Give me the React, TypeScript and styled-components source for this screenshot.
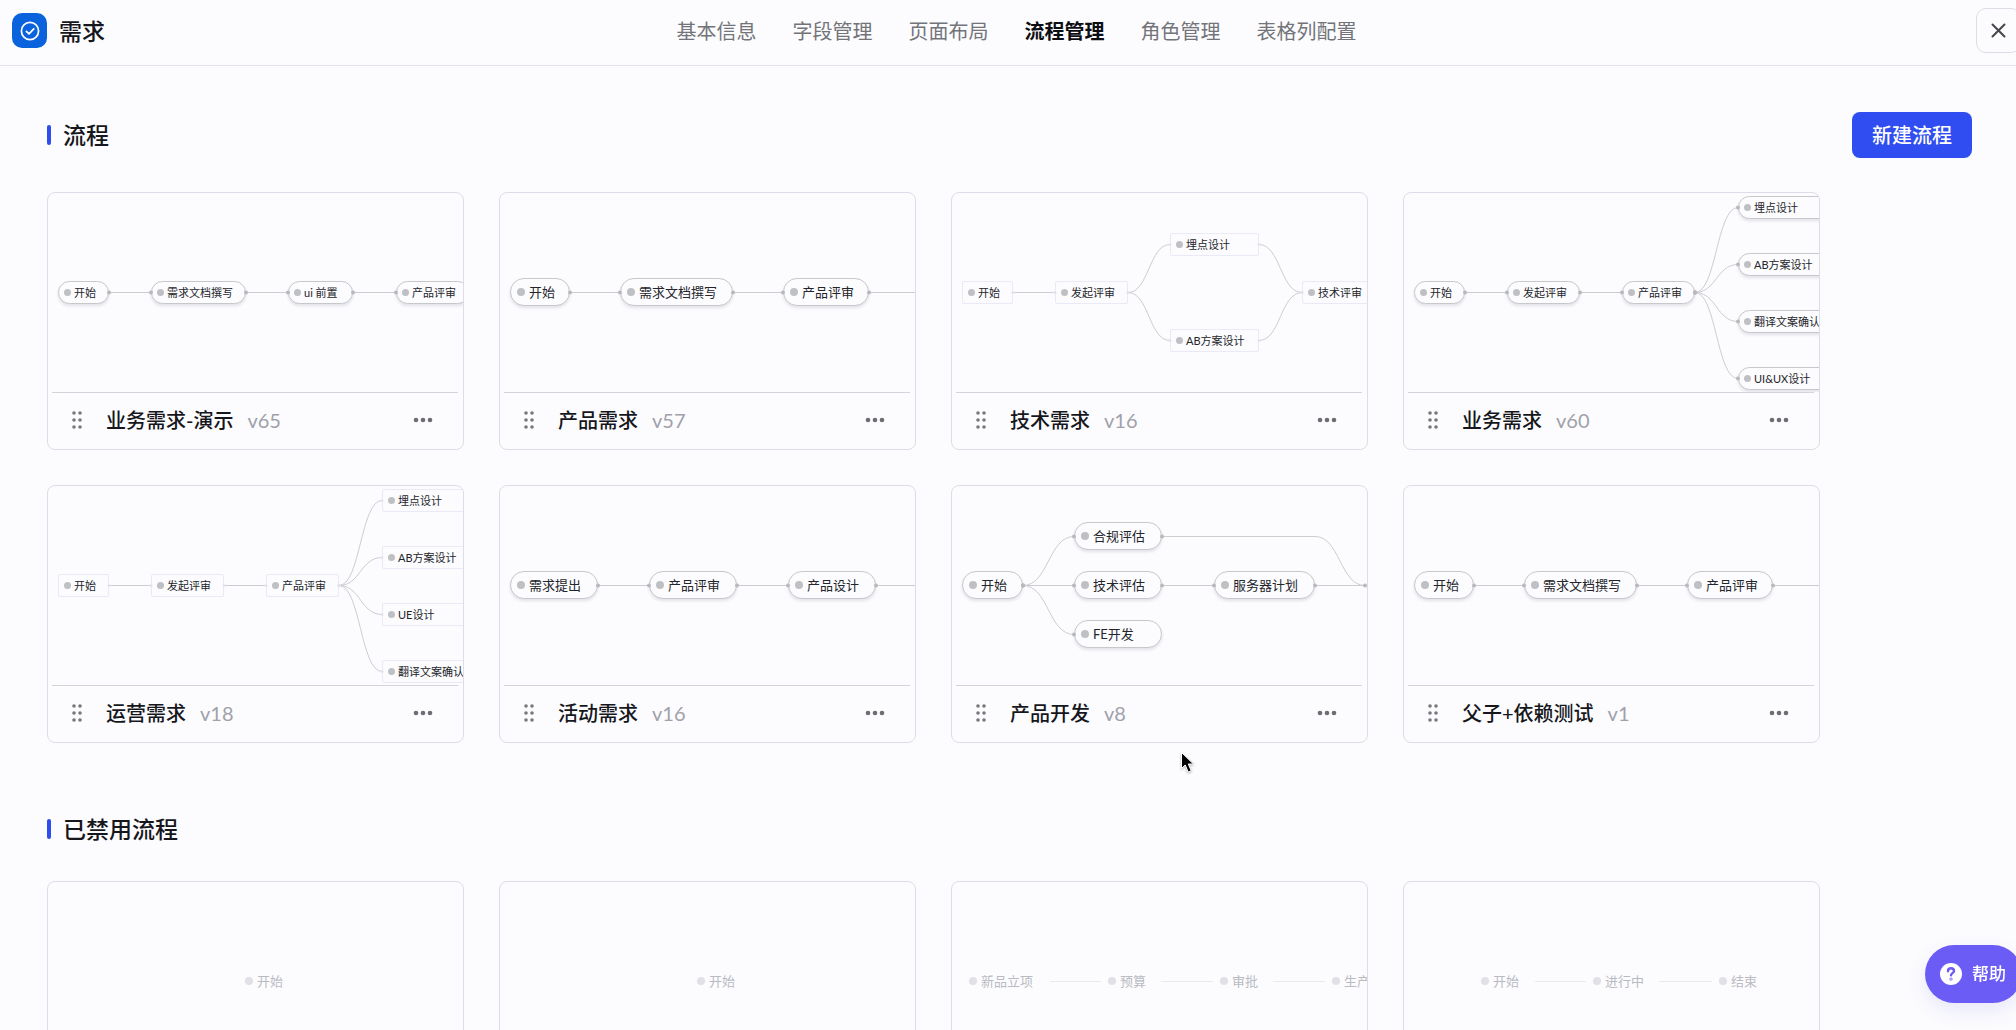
import React from "react";
import styled, { createGlobalStyle, css } from "styled-components";

const GlobalStyle = createGlobalStyle`
  *, *::before, *::after { box-sizing: border-box; }
  body {
    margin: 0;
    background: #fcfcfe;
    color: #16171c;
    font-family: Lato, "Noto Sans CJK SC", sans-serif;
    font-size: 20px;
    line-height: 28px;
  }
  button { font: inherit; color: inherit; padding: 0; border: 0; background: none; cursor: pointer; }
  h1, h2, h3, ul { margin: 0; padding: 0; font-size: inherit; font-weight: inherit; list-style: none; }
`;

const Page = styled.div`
  display: flex;
  flex-direction: column;
  height: 100vh;
  overflow: hidden;
`;

/* ---------- header ---------- */

const Header = styled.header`
  display: grid;
  grid-template-columns: 1fr auto 1fr;
  align-items: center;
  flex: none;
  height: 66px;
  margin-right: -5px;
  padding: 0 0 4px 12px;
  border-bottom: 1px solid #e1e4ea;
`;

const Brand = styled.div`
  display: flex;
  align-items: center;
  gap: 12px;
`;

const BrandIcon = styled.span`
  display: grid;
  place-items: center;
  width: 35px;
  height: 35px;
  border-radius: 10px;
  background: #0a63dc;
`;

const BrandTitle = styled.h1`
  font-size: 23px;
  font-weight: 500;
`;

const Tabs = styled.nav`
  display: flex;
  gap: 36px;
`;

const Tab = styled.a<{ $active?: boolean }>`
  color: ${(p) => (p.$active ? "#0d0e12" : "#73747a")};
  font-weight: ${(p) => (p.$active ? 700 : 400)};
  text-decoration: none;
`;

const CloseButton = styled.button`
  display: grid;
  place-items: center;
  justify-self: end;
  width: 45px;
  height: 45px;
  border: 1px solid #dcdde6;
  border-radius: 10px;
`;

/* ---------- sections ---------- */

const Main = styled.main`
  flex: 1;
  min-height: 0;
  padding: 46px 44px 46px 47px;
  overflow-y: auto;
  scrollbar-width: none;
`;

const Section = styled.section`
  margin-bottom: 63px;
`;

const SectionHead = styled.div<{ $gap: number }>`
  display: flex;
  align-items: center;
  justify-content: space-between;
  min-height: 46px;
  margin-bottom: ${(p) => p.$gap}px;
`;

const SectionTitle = styled.h2`
  display: flex;
  align-items: center;
  gap: 12px;
  font-size: 23px;
  font-weight: 500;

  &::before {
    content: "";
    width: 4px;
    height: 20px;
    border-radius: 2px;
    background: #2f4cec;
  }
`;

const PrimaryButton = styled.button`
  height: 46px;
  padding: 0 20px;
  border-radius: 8px;
  background: #2f4df0;
  color: #fff;
  font-weight: 500;
`;

const CardGrid = styled.ul`
  display: grid;
  grid-template-columns: repeat(auto-fill, 417px);
  gap: 35px;
`;

const Card = styled.li`
  border: 1px solid #dcdde8;
  border-radius: 8px;
  overflow: hidden;
`;

const CardFooter = styled.div`
  display: flex;
  align-items: center;
  height: 57px;
  margin: 0 5px 0 4px;
  padding: 0 21px 2px 16px;
  border-top: 1px solid #d3d5dc;
`;

const DragHandle = styled.button`
  display: grid;
  place-items: center;
  width: 18px;
  height: 28px;
  margin-right: 20px;
  cursor: grab;
`;

const CardTitle = styled.h3`
  font-weight: 500;
`;

const Version = styled.span`
  flex: 1;
  margin-left: 14px;
  color: #a0a1aa;
`;

const MoreButton = styled.button`
  display: grid;
  place-items: center;
  width: 28px;
  height: 28px;
`;

/* ---------- flow preview canvas ---------- */

type Shape = "pill" | "box" | "ghost";
type Size = "sm" | "lg";

const Canvas = styled.div`
  position: relative;
  height: 199px;
  overflow: hidden;
`;

const Edges = styled.svg`
  position: absolute;
  inset: 0;
  width: 100%;
  height: 100%;
`;

const shapes = {
  pill: css`
    border: 1px solid #c6c8cc;
    border-radius: 14px;
    box-shadow: 0 2px 3px rgba(40, 40, 80, 0.12);
    color: #24252b;
  `,
  box: css`
    border: 1px solid #e9e9f7;
    border-radius: 2px;
    color: #24252b;
  `,
  ghost: css`
    border: 1px solid transparent;
    color: #b9bac2;
  `,
};

const NodeBox = styled.div<{ $shape: Shape; $size: Size }>`
  position: absolute;
  display: flex;
  align-items: center;
  gap: ${(p) => (p.$size === "sm" ? 3 : 4)}px;
  height: ${(p) => (p.$size === "sm" ? 23 : 28)}px;
  margin-top: ${(p) => (p.$size === "sm" ? -11 : -14)}px;
  padding-left: ${(p) => (p.$size === "sm" ? 5 : 6)}px;
  background: #fcfcfe;
  font-size: ${(p) => (p.$size === "sm" ? 11 : 13)}px;
  line-height: 20px;
  white-space: nowrap;
  ${(p) => shapes[p.$shape]}

  &::before {
    content: "";
    flex: none;
    width: ${(p) => (p.$size === "sm" ? 7 : 8)}px;
    height: ${(p) => (p.$size === "sm" ? 7 : 8)}px;
    border-radius: 50%;
    background: ${(p) => (p.$shape === "ghost" ? "#e0e0e6" : "#bfc0c4")};
  }
`;

type FlowNode = { label: string; x: number; w: number; y?: number };
type Flow = {
  name?: string;
  version?: string;
  shape: Shape;
  size: Size;
  nodes: FlowNode[];
  /* index pairs into nodes */
  links: [number, number][];
  /* extra paths for links that leave the visible canvas */
  tails?: string[];
  /* ports of nodes that sit on the canvas edge */
  tailPorts?: [number, number][];
};

const MID = 99;

const chain = (count: number): [number, number][] =>
  Array.from({ length: count - 1 }, (_, i) => [i, i + 1]);

const LONG_CHAIN: FlowNode[] = [
  { label: "开始", x: 10, w: 60 },
  { label: "需求文档撰写", x: 120, w: 113 },
  { label: "产品评审", x: 283, w: 86 },
];

const fanOut = (labels: string[]): FlowNode[] => [
  { label: "开始", x: 10, w: 51 },
  { label: "发起评审", x: 103, w: 73 },
  { label: "产品评审", x: 218, w: 73 },
  ...labels.map((label, i) => ({ label, x: 334, w: 101, y: [14, 71, 128, 185][i] })),
];

const FAN_LINKS: [number, number][] = [[0, 1], [1, 2], [2, 3], [2, 4], [2, 5], [2, 6]];

const activeFlows: Flow[] = [
  {
    name: "业务需求-演示", version: "v65", shape: "pill", size: "sm",
    nodes: [
      { label: "开始", x: 10, w: 51 },
      { label: "需求文档撰写", x: 103, w: 95 },
      { label: "ui 前置", x: 240, w: 65 },
      { label: "产品评审", x: 348, w: 73 },
    ],
    links: chain(4),
  },
  {
    name: "产品需求", version: "v57", shape: "pill", size: "lg",
    nodes: LONG_CHAIN, links: chain(3), tails: ["M369 99H416"],
  },
  {
    name: "技术需求", version: "v16", shape: "box", size: "sm",
    nodes: [
      { label: "开始", x: 10, w: 51 },
      { label: "发起评审", x: 103, w: 73 },
      { label: "埋点设计", x: 218, w: 89, y: 51 },
      { label: "AB方案设计", x: 218, w: 89, y: 147 },
      { label: "技术评审", x: 350, w: 73 },
    ],
    links: [[0, 1], [1, 2], [1, 3], [2, 4], [3, 4]],
  },
  {
    name: "业务需求", version: "v60", shape: "pill", size: "sm",
    nodes: fanOut(["埋点设计", "AB方案设计", "翻译文案确认", "UI&UX设计"]),
    links: FAN_LINKS,
  },
  {
    name: "运营需求", version: "v18", shape: "box", size: "sm",
    nodes: fanOut(["埋点设计", "AB方案设计", "UE设计", "翻译文案确认"]),
    links: FAN_LINKS,
  },
  {
    name: "活动需求", version: "v16", shape: "pill", size: "lg",
    nodes: [
      { label: "需求提出", x: 10, w: 88 },
      { label: "产品评审", x: 149, w: 88 },
      { label: "产品设计", x: 288, w: 88 },
    ],
    links: chain(3), tails: ["M376 99H416"],
  },
  {
    name: "产品开发", version: "v8", shape: "pill", size: "lg",
    nodes: [
      { label: "开始", x: 10, w: 61 },
      { label: "合规评估", x: 122, w: 88, y: 50 },
      { label: "技术评估", x: 122, w: 88 },
      { label: "FE开发", x: 122, w: 88, y: 148 },
      { label: "服务器计划", x: 262, w: 101 },
    ],
    links: [[0, 1], [0, 2], [0, 3], [2, 4]],
    tails: ["M210 50H363C388 50 388 99 413 99", "M363 99H413"],
    tailPorts: [[210, 50], [363, 99], [413, 99]],
  },
  {
    name: "父子+依赖测试", version: "v1", shape: "pill", size: "lg",
    nodes: LONG_CHAIN, links: chain(3), tails: ["M369 99H416"],
  },
];

const disabledFlows: Flow[] = [
  { shape: "ghost", size: "lg", nodes: [{ label: "开始", x: 190, w: 60 }], links: [] },
  { shape: "ghost", size: "lg", nodes: [{ label: "开始", x: 190, w: 60 }], links: [] },
  {
    shape: "ghost", size: "lg",
    nodes: [
      { label: "新品立项", x: 10, w: 88 },
      { label: "预算", x: 149, w: 60 },
      { label: "审批", x: 261, w: 60 },
      { label: "生产", x: 373, w: 60 },
    ],
    links: chain(4),
  },
  {
    shape: "ghost", size: "lg",
    nodes: [
      { label: "开始", x: 70, w: 61 },
      { label: "进行中", x: 182, w: 73 },
      { label: "结束", x: 308, w: 60 },
    ],
    links: chain(3),
  },
];

function linkPath(a: FlowNode, b: FlowNode) {
  const x1 = a.x + a.w;
  const y1 = a.y ?? MID;
  const y2 = b.y ?? MID;
  const mid = (x1 + b.x) / 2;
  return y1 === y2 ? `M${x1} ${y1}H${b.x}` : `M${x1} ${y1}C${mid} ${y1} ${mid} ${y2} ${b.x} ${y2}`;
}

function Preview({ flow }: { flow: Flow }) {
  const stroke = flow.shape === "ghost" ? "#e9e9f0" : "#cccdd3";
  const ports: [number, number][] = flow.links.flatMap(([a, b]): [number, number][] => {
    const from = flow.nodes[a];
    const to = flow.nodes[b];
    return [[from.x + from.w, from.y ?? MID], [to.x, to.y ?? MID]];
  });
  if (flow.tails && !flow.tailPorts) {
    const last = flow.nodes[flow.nodes.length - 1];
    ports.push([last.x + last.w, MID]);
  }
  ports.push(...(flow.tailPorts ?? []));

  return (
    <Canvas>
      <Edges aria-hidden="true">
        <g fill="none" stroke={stroke} transform="translate(0 0.5)">
          {flow.links.map(([a, b]) => (
            <path key={`${a}-${b}`} d={linkPath(flow.nodes[a], flow.nodes[b])} />
          ))}
          {flow.tails?.map((d) => <path key={d} d={d} />)}
        </g>
      </Edges>
      {flow.nodes.map((n) => (
        <NodeBox
          key={n.label}
          $shape={flow.shape}
          $size={flow.size}
          style={{ left: n.x, top: n.y ?? MID, width: n.w }}
        >
          {n.label}
        </NodeBox>
      ))}
      {flow.shape !== "ghost" && (
        <Edges aria-hidden="true">
          {ports.map(([x, y], i) => (
            <circle
              key={i}
              cx={x}
              cy={y + 0.5}
              r={flow.shape === "pill" ? 2 : 1.5}
              fill={flow.shape === "pill" ? "#b7b9bd" : "#e3e3ee"}
            />
          ))}
        </Edges>
      )}
    </Canvas>
  );
}

function FlowCard({ flow }: { flow: Flow }) {
  return (
    <Card>
      <Preview flow={flow} />
      {flow.name && (
        <CardFooter>
          <DragHandle aria-label="拖动排序">
            <svg width="10" height="18" viewBox="0 0 10 18" fill="#77787d">
              {[2, 9, 16].map((y) => (
                <React.Fragment key={y}>
                  <circle cx="2" cy={y} r="1.8" />
                  <circle cx="8" cy={y} r="1.8" />
                </React.Fragment>
              ))}
            </svg>
          </DragHandle>
          <CardTitle>{flow.name}</CardTitle>
          <Version>{flow.version}</Version>
          <MoreButton aria-label="更多">
            <svg width="20" height="6" viewBox="0 0 20 6" fill="#6d6e73">
              <circle cx="3" cy="3" r="2.3" />
              <circle cx="10" cy="3" r="2.3" />
              <circle cx="17" cy="3" r="2.3" />
            </svg>
          </MoreButton>
        </CardFooter>
      )}
    </Card>
  );
}

/* ---------- floating parts ---------- */

const HelpButton = styled.button`
  position: fixed;
  right: -6px;
  bottom: 27px;
  display: flex;
  align-items: center;
  gap: 10px;
  width: 97px;
  height: 58px;
  padding-left: 15px;
  border-radius: 29px;
  background: #6c5cf6;
  color: #fff;
  font-size: 17px;
  font-weight: 500;
  box-shadow: 0 8px 20px rgba(90, 80, 220, 0.12);
`;

const HelpMark = styled.span`
  display: grid;
  place-items: center;
  width: 22px;
  height: 22px;
  border-radius: 50%;
  background: #fff;
`;

const Pointer = styled.svg`
  position: fixed;
  left: 1180px;
  top: 751px;
  pointer-events: none;
  filter: drop-shadow(0 1px 1px rgba(0, 0, 0, 0.3));
`;

const tabs = ["基本信息", "字段管理", "页面布局", "流程管理", "角色管理", "表格列配置"];

export default function App() {
  return (
    <Page>
      <GlobalStyle />
      <Header>
        <Brand>
          <BrandIcon>
            <svg width="20" height="20" viewBox="0 0 20 20" fill="none" stroke="#fff" strokeWidth="1.7" strokeLinecap="round" strokeLinejoin="round">
              <circle cx="10" cy="10" r="8.6" />
              <path d="M6.4 10.3l2.6 2.6 4.8-5" />
            </svg>
          </BrandIcon>
          <BrandTitle>需求</BrandTitle>
        </Brand>
        <Tabs>
          {tabs.map((t) => (
            <Tab key={t} href="#" $active={t === "流程管理"} aria-current={t === "流程管理" ? "page" : undefined}>
              {t}
            </Tab>
          ))}
        </Tabs>
        <CloseButton aria-label="关闭">
          <svg width="15" height="15" viewBox="0 0 15 15" fill="none" stroke="#45464c" strokeWidth="2" strokeLinecap="round">
            <path d="M1.500 1.500l12 12M13.500 1.500L1.500 13.500" />
          </svg>
        </CloseButton>
      </Header>

      <Main>
        <Section>
          <SectionHead $gap={34}>
            <SectionTitle>流程</SectionTitle>
            <PrimaryButton>新建流程</PrimaryButton>
          </SectionHead>
          <CardGrid>
            {activeFlows.map((f, i) => <FlowCard key={i} flow={f} />)}
          </CardGrid>
        </Section>
        <Section>
          <SectionHead $gap={29}>
            <SectionTitle>已禁用流程</SectionTitle>
          </SectionHead>
          <CardGrid>
            {disabledFlows.map((f, i) => <FlowCard key={i} flow={f} />)}
          </CardGrid>
        </Section>
      </Main>

      <HelpButton>
        <HelpMark>
          <svg width="12" height="16" viewBox="0 0 12 16" fill="none" stroke="#6c5cf6" strokeWidth="2.4" strokeLinecap="round" strokeLinejoin="round">
            <path d="M3 5.200C3 3.300 4.300 2.300 6 2.300S9 3.400 9 5C9 7 6 7.200 6 9.200" />
            <circle cx="6" cy="13" r="0.400" />
          </svg>
        </HelpMark>
        帮助
      </HelpButton>
      <Pointer width="16" height="24" viewBox="0 0 16 24" aria-hidden="true">
        <path d="M1.500 1.500V17.500L5.200 14L8.200 21L11.200 19.700L8.300 13H13.500Z" fill="#000" stroke="#fff" strokeWidth="1" />
      </Pointer>
    </Page>
  );
}
